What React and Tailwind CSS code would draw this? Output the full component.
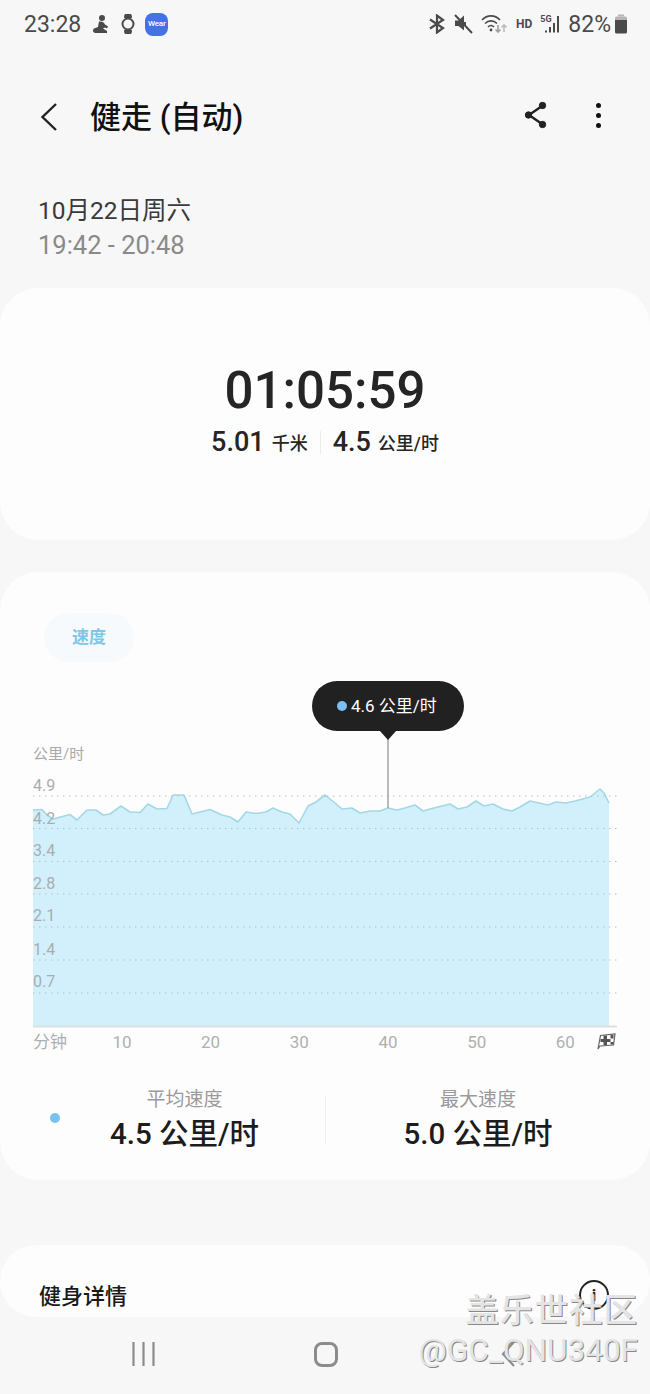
const FONT = '[font-family:Roboto,"Noto_Sans_CJK_SC",sans-serif]';

const linePoints = [
  [33, 810], [42, 809.5], [47, 815], [53, 819], [70, 814.5], [77, 820], [87, 810], [96, 810], [103, 815], [110, 814],
  [121, 806], [130, 812], [140, 812.5], [148, 804], [157, 809], [167, 808.5], [173, 795], [184, 795], [192, 814],
  [210, 809.5], [222, 815], [230, 817], [238, 822], [246, 812], [256, 813.5], [266, 812], [273, 808], [282, 812],
  [290, 814], [299, 823], [308, 806], [316, 802], [325, 795], [335, 803], [342, 809], [352, 808], [360, 813], [370, 811],
  [380, 811], [388, 808], [397, 810], [405, 808], [415, 805], [423, 811], [430, 809], [450, 804], [458, 809], [467, 807],
  [476, 801], [484, 806], [493, 804], [503, 809], [512, 811], [520, 807], [530, 801], [548, 805], [556, 802], [566, 803],
  [575, 801], [590, 797], [600, 789], [604, 793], [609, 803],
];

const gridLines = [796, 828.5, 861.5, 894, 927, 960, 993];
const yLabels = [
  { text: '4.9', top: 'top-[95px]' },
  { text: '4.2', top: 'top-[128px]' },
  { text: '3.4', top: 'top-[160px]' },
  { text: '2.8', top: 'top-[193px]' },
  { text: '2.1', top: 'top-[225px]' },
  { text: '1.4', top: 'top-[259px]' },
  { text: '0.7', top: 'top-[291px]' },
];
const xLabels = ['10', '20', '30', '40', '50', '60'];

function StatusBar() {
  return (
    <div className="flex h-[48px] shrink-0 items-center justify-between pl-[24px] pr-[22px] text-[#4a4a4a]">
      <div className="flex items-center">
        <span className="text-[23px] leading-none">23:28</span>
        <svg className="ml-[11px]" width="18" height="20" viewBox="0 0 18 20" fill="#4a4a4a">
          <circle cx="10" cy="4" r="3" />
          <path d="M7 7.500c3-.5 5 .5 6 3l3 2-1 2-2-1-2 1 4 2.500v2H4c-3 0-4-2.500-2-4.500l4-1.500z" />
        </svg>
        <svg className="ml-[11px]" width="14" height="20" viewBox="0 0 14 20" fill="none" stroke="#4a4a4a">
          <path d="M3.5 4 4 0.5h6L10.500 4M3.500 16l.5 3.500h6l.5-3.500" fill="#4a4a4a" strokeWidth="1" />
          <circle cx="7" cy="10" r="5.500" strokeWidth="2" />
        </svg>
        <div className="ml-[10px] flex h-[23px] w-[23px] items-center justify-center rounded-[8px] bg-[#4471e4] text-[8px] font-medium tracking-tight text-white">
          Wear
        </div>
      </div>
      <div className="flex items-center">
        <svg width="18" height="20" viewBox="0 0 18 20" fill="none" stroke="#4a4a4a" strokeWidth="2.200">
          <path d="M2 5.500 15 14l-6 4.500V1.500L15 6 2 14.500" />
        </svg>
        <svg className="ml-[8px]" width="19" height="20" viewBox="0 0 19 20" fill="#4a4a4a">
          <path d="M1 6.500h3.500L10 1.500v15l-5.500-4.500H1z" />
          <path d="M11 8v3l-3-1M1 1l17 18" stroke="#4a4a4a" strokeWidth="2" fill="none" />
        </svg>
        <svg className="ml-[8px]" width="26" height="20" viewBox="0 0 26 20" fill="none" stroke="#4a4a4a" strokeWidth="1.600">
          <path d="M1 6c5-5.500 13-5.500 18 0M4 9.500c3.500-3.500 8.500-3.500 12 0M7 13c2-2 4-2 6 0" />
          <circle cx="10" cy="16" r="1.400" fill="#4a4a4a" stroke="none" />
          <path d="M17 11v7m-2.500-2.500L17 18l2.500-2.500" stroke="#a0a0a0" />
          <path d="M23 18v-7m-2.500 2.500L23 11l2.500 2.500" stroke="#bdbdbd" />
        </svg>
        <span className="ml-[9px] text-[12px] font-bold">HD</span>
        <div className="relative ml-[8px] h-[20px] w-[21px]">
          <span className="absolute left-0 top-[-1px] text-[9px] font-bold leading-[12px]">5G</span>
          <svg className="absolute inset-0" width="21" height="20" viewBox="0 0 21 20" fill="#4a4a4a">
            <rect x="5" y="16.500" width="2" height="2" />
            <rect x="9" y="13" width="2" height="5.500" />
            <rect x="13" y="9" width="2" height="9.500" />
            <rect x="17" y="2" width="2" height="16.500" />
          </svg>
        </div>
        <span className="ml-[7px] text-[23px] leading-none">82%</span>
        <svg className="ml-[3px]" width="14" height="20" viewBox="0 0 14 20">
          <path d="M4 0.500h6v2H4z" fill="#b5b5b5" />
          <path d="M1 4a1.500 1.500 0 0 1 1.500-1.500h9A1.500 1.500 0 0 1 13 4v2H1z" fill="#b5b5b5" />
          <path d="M1 6h12v12a1.500 1.500 0 0 1-1.500 1.500h-9A1.500 1.500 0 0 1 1 18z" fill="#4a4a4a" />
        </svg>
      </div>
    </div>
  );
}

function Header() {
  return (
    <div className="mt-[42px] flex h-[54px] shrink-0 items-center pl-[40px] pr-[49px]">
      <svg width="18" height="32" viewBox="0 0 18 32" fill="none" stroke="#222" strokeWidth="2.400">
        <path d="M16 3 2.500 16 16 29" />
      </svg>
      <h1 className="ml-[32px] text-[31px] font-medium leading-none text-[#111]">健走 (自动)</h1>
      <svg className="mb-[4px] ml-auto" width="26" height="32" viewBox="0 0 26 32" fill="#222" stroke="#222">
        <path d="M19 7 6 16l13 9" fill="none" strokeWidth="2.400" />
        <circle cx="19.500" cy="6.500" r="3.200" />
        <circle cx="5.500" cy="16" r="3.200" />
        <circle cx="19.500" cy="25.500" r="3.200" />
      </svg>
      <div className="mb-[4px] ml-[47px] flex flex-col gap-[5px]">
        <span className="h-[5px] w-[5px] rounded-full bg-[#111]" />
        <span className="h-[5px] w-[5px] rounded-full bg-[#111]" />
        <span className="h-[5px] w-[5px] rounded-full bg-[#111]" />
      </div>
    </div>
  );
}

function SummaryCard() {
  return (
    <section className="mt-[25px] flex h-[252px] shrink-0 flex-col items-center rounded-[38px] bg-[#fdfdfd] pt-[73px] text-[#252525]">
      <div className="text-[51px] font-medium leading-[60px]">01:05:59</div>
      <div className="mt-[5px] flex items-center">
        <span className="text-[27px] font-medium leading-[32px]">5.01</span>
        <span className="ml-[7px] mt-[3px] text-[18px] font-medium">千米</span>
        <span className="mx-[12px] h-[23px] w-px bg-[#ececec]" />
        <span className="text-[27px] font-medium leading-[32px]">4.5</span>
        <span className="ml-[7px] mt-[3px] text-[18px] font-medium">公里/时</span>
      </div>
    </section>
  );
}

function SpeedChart() {
  const line = linePoints.map((p) => p.join(',')).join(' ');
  const area = `33,1026 ${line} 609,1026`;
  return (
    <div className="relative mt-[19px]">
      <svg className="block" width="650" height="347" viewBox="0 681 650 347">
        <polygon points={area} fill="#d1f0fc" />
        {gridLines.map((y) => (
          <line key={y} x1="33" x2="617" y1={y} y2={y} stroke="#b9c0c4" strokeWidth="1.200" strokeDasharray="1.500 4.500" />
        ))}
        <polyline points={line} fill="none" stroke="#a4d8e4" strokeWidth="1.600" strokeLinejoin="round" />
        <line x1="33" x2="617" y1="1026.500" y2="1026.500" stroke="#dcdfe1" strokeWidth="2" />
        <line x1="388" x2="388" y1="735" y2="808" stroke="#8f8f8f" strokeWidth="1.200" />
      </svg>

      <div className="absolute left-[33px] top-[63px] text-[15px] leading-[20px] text-[#a9a9a9]">公里/时</div>
      {yLabels.map((l) => (
        <div key={l.text} className={`absolute left-[33px] text-[16px] leading-[20px] text-[#a9adb0] ${l.top}`}>
          {l.text}
        </div>
      ))}

      <div className="absolute left-[312px] top-0 flex h-[50px] w-[152px] items-center rounded-[25px] bg-[#212121] pl-[25px] pt-[2px] text-[17px] text-white">
        <span className="mb-[2px] mr-[4px] h-[10px] w-[10px] rounded-full bg-[#79c0f4]" />
        4.6 公里/时
      </div>
      <div className="absolute left-[380px] top-[50px] h-0 w-0 border-x-[8px] border-t-[9px] border-x-transparent border-t-[#212121]" />

      <div className="mt-[3px] flex h-[24px] items-center pl-[33px] text-[17px] text-[#b0b0b0]">
        <span className="w-[44.600px]">分钟</span>
        {xLabels.map((x) => (
          <span key={x} className="w-[88.700px] text-center">{x}</span>
        ))}
        <svg className="-ml-[13px] mb-[3px]" width="19" height="17" viewBox="0 0 19 17">
          <path d="M1 16 3.500 2.500 18 1l-1.500 11L3 13z" fill="#fff" stroke="#666" strokeWidth="1.200" />
          <path d="M6.500 2.500h3.500V6h3.500V2h3v3.500h-3V9h3v2.500h-3V9H10v3H6.500V9h-3V6h3z" fill="#555" />
        </svg>
      </div>
    </div>
  );
}

function StatsRow() {
  return (
    <div className="relative mt-[33px] flex items-center">
      <span className="absolute left-[50px] top-[25px] h-[10px] w-[10px] rounded-full bg-[#79c0f4]" />
      <div className="ml-[44px] flex w-[281px] flex-col items-center">
        <span className="text-[19px] leading-[24px] text-[#9a9a9a]">平均速度</span>
        <span className="mt-[4px] text-[29.500px] font-medium leading-[36px] text-[#1c1c1c]">4.5 公里/时</span>
      </div>
      <span className="h-[48px] w-px bg-[#efefef]" />
      <div className="flex w-[304px] flex-col items-center">
        <span className="text-[19px] leading-[24px] text-[#9a9a9a]">最大速度</span>
        <span className="mt-[4px] text-[29.500px] font-medium leading-[36px] text-[#1c1c1c]">5.0 公里/时</span>
      </div>
    </div>
  );
}

function ChartCard() {
  return (
    <section className="mt-[32px] h-[608px] shrink-0 rounded-[38px] bg-[#fdfdfd] pt-[41px]">
      <div className="ml-[44px] flex h-[49px] w-[90px] items-center justify-center rounded-full bg-[#f6fafc] text-[17px] font-bold text-[#80c6ea]">
        速度
      </div>
      <SpeedChart />
      <StatsRow />
    </section>
  );
}

function DetailsCard() {
  return (
    <section className="mt-[65px] flex h-[72px] shrink-0 items-end justify-between rounded-[36px] bg-[#fdfdfd] pb-[5px] pl-[39px] pr-[41px]">
      <span className="text-[22px] font-medium leading-[30px] text-[#1a1a1a]">健身详情</span>
      <div className="mb-[2px] flex h-[30px] w-[30px] items-center justify-center rounded-full border-2 border-[#222] text-[17px] font-bold leading-none text-[#222]">
        i
      </div>
    </section>
  );
}

function NavBar() {
  return (
    <div className="flex flex-1 items-center pb-[3px] pl-[132px]">
      <svg width="23" height="24" viewBox="0 0 23 24" fill="none" stroke="#8c8c8c" strokeWidth="2.200">
        <path d="M1.500 0v24M11.500 0v24M21.500 0v24" />
      </svg>
      <div className="ml-[159px] h-[25px] w-[24px] rounded-[8px] border-[3px] border-[#8c8c8c]" />
      <svg className="ml-[162px]" width="16" height="28" viewBox="0 0 16 28" fill="none" stroke="#8c8c8c" strokeWidth="2.200">
        <path d="M14 2 3 14l11 12" />
      </svg>
    </div>
  );
}

function Watermark() {
  return (
    <div className="absolute right-[12px] top-[1291px] flex flex-col items-end text-[#e4e4e4] [text-shadow:1px_1px_0_#888]">
      <span className="text-[33.500px] font-medium leading-[40px] tracking-[1px]">盖乐世社区</span>
      <span className="mt-[2px] text-[31.500px] leading-[36px]">@GC_QNU340F</span>
    </div>
  );
}

export default function App() {
  return (
    <div className={`relative flex h-[1394px] w-[650px] flex-col overflow-hidden bg-[#f7f7f7] ${FONT}`}>
      <StatusBar />
      <Header />
      <div className="mt-[49px] pl-[38px] leading-[35px]">
        <div className="text-[24.500px] text-[#3a3a3a]">10月22日周六</div>
        <div className="text-[25.500px] text-[#8a8a8a]">19:42 - 20:48</div>
      </div>
      <SummaryCard />
      <ChartCard />
      <DetailsCard />
      <NavBar />
      <Watermark />
    </div>
  );
}
